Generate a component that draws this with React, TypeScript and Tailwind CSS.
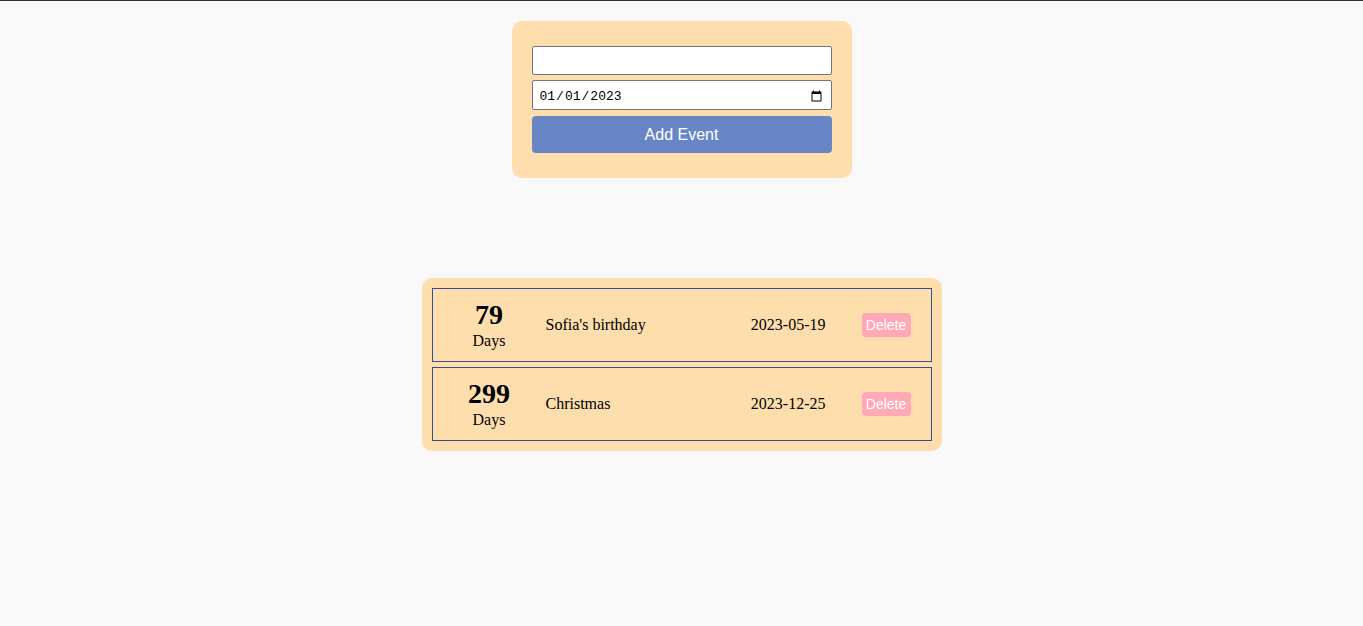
import React, { useState } from 'react';

type CountdownEvent = {
  id: number;
  days: number;
  name: string;
  date: string;
};

const events: CountdownEvent[] = [
  { id: 1, days: 79, name: "Sofia's birthday", date: '2023-05-19' },
  { id: 2, days: 299, name: 'Christmas', date: '2023-12-25' },
];

const EventRow: React.FC<{ event: CountdownEvent }> = ({ event }) => {
  return (
    <div className="flex items-center h-[74px] border border-[#34508f] font-['Liberation_Serif',serif] text-black">
      <div className="w-[113px] flex flex-col items-center">
        <span className="text-[28px] font-bold leading-[30px]">{event.days}</span>
        <span className="text-[16px] leading-[21px]">Days</span>
      </div>
      <div className="flex-1 text-[16px]">{event.name}</div>
      <div className="text-[16px]">{event.date}</div>
      <button className="ml-[36px] mr-[20px] h-[24px] w-[49px] rounded-[4px] bg-[#ffa8b6] text-white text-[14px] font-['Liberation_Sans',sans-serif]">
        Delete
      </button>
    </div>
  );
};

const App: React.FC = () => {
  const [name, setName] = useState('');
  const [date, setDate] = useState('2023-01-01');

  return (
    <div className="min-h-screen bg-[#f9f9f9] border-t border-[#333] flex flex-col items-center">
      <div className="mt-[20px] w-[340px] rounded-[10px] bg-[#ffdead] px-5 py-[25px] flex flex-col">
        <input
          type="text"
          value={name}
          onChange={(e) => setName(e.target.value)}
          className="h-[29px] w-full border border-[#767676] rounded-[2px] bg-white px-1 text-[13px] outline-none"
        />
        <input
          type="date"
          value={date}
          onChange={(e) => setDate(e.target.value)}
          className="mt-[5px] h-[30px] w-full border border-[#767676] rounded-[2px] bg-white px-[6px] pt-[3px] text-[13px] font-['Liberation_Mono',monospace] outline-none"
        />
        <button className="mt-[6px] h-[37px] w-full rounded-[4px] bg-[#6886c5] text-white text-[16px] font-['Liberation_Sans',sans-serif]">
          Add Event
        </button>
      </div>

      <div className="mt-[100px] w-[520px] rounded-[10px] bg-[#ffdead] p-[10px] flex flex-col gap-[5px]">
        {events.map((ev) => (
          <EventRow key={ev.id} event={ev} />
        ))}
      </div>
    </div>
  );
};

export default App;
